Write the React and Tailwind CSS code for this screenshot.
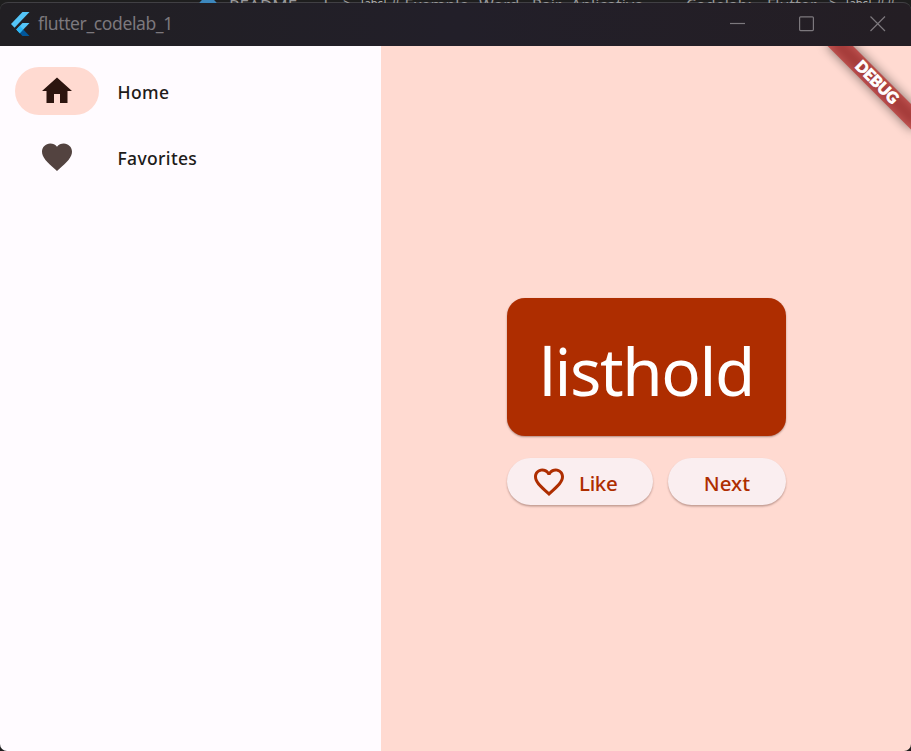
import React from "react";

const HEART =
  "M12 21.35l-1.45-1.32C5.4 15.36 2 12.28 2 8.5 2 5.42 4.42 3 7.5 3c1.74 0 3.41.81 4.5 2.09C13.09 3.81 14.76 3 16.5 3 19.58 3 22 5.42 22 8.5c0 3.78-3.4 6.86-8.55 11.54L12 21.35z";
const HEART_OUTLINE =
  "M16.5 3c-1.74 0-3.41.81-4.5 2.09C10.91 3.81 9.24 3 7.5 3 4.42 3 2 5.42 2 8.5c0 3.78 3.4 6.86 8.55 11.54L12 21.35l1.45-1.32C18.6 15.36 22 12.28 22 8.5 22 5.42 19.58 3 16.5 3zm-4.4 15.55l-.1.1-.1-.1C7.14 14.24 4 11.39 4 8.5 4 6.5 5.5 5 7.5 5c1.54 0 3.04.99 3.57 2.36h1.87C13.46 5.99 14.96 5 16.5 5c2 0 3.5 1.5 3.5 3.5 0 2.89-3.14 5.74-7.9 10.05z";
const HOME = "M10 20v-6h4v6h5v-8h3L12 3 2 12h3v8z";

function Icon({ d }) {
  return (
    <svg viewBox="0 0 24 24" className="size-9 shrink-0" fill="currentColor">
      <path d={d} />
    </svg>
  );
}

function FlutterLogo() {
  return (
    <svg viewBox="2.3 0 19.4 24" className="-mt-px h-6 w-[18.5px]" preserveAspectRatio="none">
      <path fill="#54c5f8" d="M14.314 0L2.3 12 6 15.7 21.684.013z" />
      <path fill="#54c5f8" d="M14.328 11.072L7.857 17.53l3.68 3.69 10.163-10.148z" />
      <path fill="#01579b" d="M11.54 21.22L14.327 24H21.7l-6.46-6.468z" />
      <path fill="#29b6f6" d="M7.857 17.53l3.69-3.69 3.69 3.69-3.69 3.69z" />
    </svg>
  );
}

function TitleBar() {
  return (
    <header className="flex h-11 shrink-0 items-center rounded-t-lg border-t border-[#414044] bg-gradient-to-r from-[#211f23] via-[#221f29] to-[#241e24] pl-[11px] text-[#7c787d]">
      <FlutterLogo />
      <span className="-mt-0.5 ml-[8.5px] text-[17.5px] leading-none tracking-[-0.38px]">flutter_codelab_1</span>
      <div className="-mt-px ml-auto flex items-center pr-[25.5px]">
        <svg width="156" height="16" fill="none" stroke="currentColor" strokeWidth="1.2">
          <path d="M0 7.5h15" />
          <rect x="69.6" y=".8" width="13.8" height="13.8" rx="1" />
          <path d="M140.500 .5L155 15M155 .5L140.500 15" />
        </svg>
      </div>
    </header>
  );
}

// Tops of the editor breadcrumb words that show above the window frame.
function Desktop() {
  return (
    <div className="relative h-[2px] shrink-0">
      <div className="absolute inset-x-0 top-0 h-[3px] overflow-hidden whitespace-nowrap text-[16px] leading-none text-[#98989a]">
        <span className="absolute left-[198px] top-[-2px] size-[20px] rounded-full bg-[#3c87bd]" />
        <span className="absolute left-[229px] top-[-3px] text-[17px]">README.md</span>
        <span className="absolute left-[343px] top-[-4px]">&gt;</span>
        <span className="absolute left-[361px] top-[-3px] text-[11px] text-[#b5b5b5]">[abc]</span>
        <span className="absolute left-[390px] top-[-3px]"># Exemplo</span>
        <span className="absolute left-[479px] top-[-3px]">Word</span>
        <span className="absolute left-[532px] top-[-3px]">Pair</span>
        <span className="absolute left-[571px] top-[-3px]">Aplicativo -</span>
        <span className="absolute left-[686px] top-[-3px]">Codelab:</span>
        <span className="absolute left-[767px] top-[-3px]">Flutter</span>
        <span className="absolute left-[829px] top-[-4px]">&gt;</span>
        <span className="absolute left-[846px] top-[-3px] text-[11px] text-[#b5b5b5]">[abc]</span>
        <span className="absolute left-[875px] top-[-3px]">##</span>
      </div>
    </div>
  );
}

function RailItem({ icon, label, selected }) {
  return (
    <div className="flex h-12 items-center">
      <div
        className={
          selected
            ? "flex h-12 w-[84px] items-center justify-center rounded-full bg-[#ffdad1] text-[#2c150f]"
            : "flex h-12 w-[84px] items-center justify-center text-[#534340]"
        }
      >
        <Icon d={icon} />
      </div>
      <span className="ml-[18.5px] pt-[3px] text-[17.5px] font-medium leading-none tracking-[0.35px] text-[#201a19]">
        {label}
      </span>
    </div>
  );
}

const buttonClass =
  "flex h-[47.5px] items-center rounded-full bg-[#faeef0] text-[20.5px] font-medium leading-none text-[#ae2d00] shadow-[0_1.5px_2px_rgba(60,20,10,0.32)]";

function DebugBanner() {
  return (
    <div className="pointer-events-none absolute right-0 top-0 size-[100px] overflow-hidden">
      <div className="absolute left-[40px] top-[41px] h-[18px] w-[120px] origin-[60px_-41px] rotate-45">
        <div className="absolute inset-0 bg-black/50 blur-[5.5px]" />
        <div className="absolute inset-0 flex items-center justify-center bg-[#b71c1c]/63 pl-[3px] font-['Lato'] text-[15.500px] font-black leading-none text-white [-webkit-text-stroke:0.8px_white]">
          DEBUG
        </div>
      </div>
    </div>
  );
}

export default function App() {
  return (
    <div className="flex h-[751px] w-[911px] flex-col overflow-hidden bg-[#1e1e1e] font-['Noto_Sans',sans-serif]">
      <Desktop />
      <TitleBar />
      <div className="flex min-h-0 flex-1 overflow-hidden rounded-b-[7px]">
        <nav className="flex w-[381px] shrink-0 flex-col gap-[18px] bg-[#fffbff] pl-[15px] pt-[21px]">
          <RailItem icon={HOME} label="Home" selected />
          <RailItem icon={HEART} label="Favorites" />
        </nav>
        <main className="relative flex flex-1 flex-col bg-[#ffdad1] pl-[126.2px] pt-[252.4px]">
          <div className="flex w-[278.500px] flex-col gap-[21.600px]">
            <div className="flex h-[138px] items-center justify-center rounded-[18px] bg-[#ae2d00] pt-[7px] text-[65.500px] leading-none tracking-[-1.4px] text-white shadow-[0_1px_2px_rgba(60,20,10,0.4)]">
              listhold
            </div>
            <div className="flex gap-[15px]">
              <button className={`${buttonClass} w-[146px] pl-[23.800px]`}>
                <Icon d={HEART_OUTLINE} />
                <span className="ml-3 pt-[3px] tracking-[-0.3px]">Like</span>
              </button>
              <button className={`${buttonClass} flex-1 justify-center`}>
                <span className="pt-[3px]">Next</span>
              </button>
            </div>
          </div>
          <DebugBanner />
        </main>
      </div>
    </div>
  );
}
